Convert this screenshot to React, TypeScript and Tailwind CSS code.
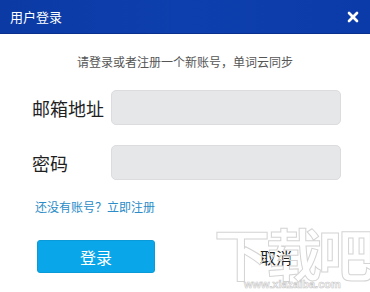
import { X } from "lucide-react";

const font = "font-['Noto_Sans_CJK_SC','Liberation_Sans',sans-serif]";

function Field({ label }: { label: string }) {
  return (
    <div className="flex items-center">
      <label className="w-[79px] text-[18px] leading-[24px] text-[#1f1f1f]">{label}</label>
      <input
        className="h-[35px] w-[230px] rounded-[5px] border border-[#dcdcde] bg-[#e6e7e9] px-2 text-[14px] outline-none"
        aria-label={label}
      />
    </div>
  );
}

export default function App() {
  return (
    <div className={`relative h-[292px] w-[370px] overflow-hidden bg-white ${font}`}>
      <header className="flex h-[34px] items-center justify-between border-b border-[#0a2f8c] bg-gradient-to-r from-[#0b3aa4] via-[#0d3fae] to-[#0b3ba8] pr-[5px] pl-[10px]">
        <h1 className="text-[13px] leading-none text-white">用户登录</h1>
        <button className="grid h-6 w-6 place-items-center text-white" aria-label="关闭">
          <X size={16} strokeWidth={4} />
        </button>
      </header>

      <p className="mt-[20px] text-center text-[12px] leading-[16px] text-[#555]">
        请登录或者注册一个新账号，单词云同步
      </p>

      <div className="mt-[20px] flex flex-col gap-[20px] pl-[32px]">
        <Field label="邮箱地址" />
        <Field label="密码" />
      </div>

      <a href="#" className="mt-[19px] ml-[35px] block text-[12px] leading-[16px] text-[#2a8cc8]">
        还没有账号？立即注册
      </a>

      <div className="mt-[25px] flex gap-[62px] pl-[37px]">
        <button className="h-[33px] w-[118px] rounded-[3px] border border-[#0a9ad8] bg-[#0aa6ea] text-[16px] text-white">
          登录
        </button>
        <button className="h-[33px] w-[118px] rounded-[3px] bg-white text-[16px] text-[#1f1f1f]">
          取消
        </button>
      </div>

      <div className="pointer-events-none absolute top-[226px] left-[214px] select-none">
        <div className="text-[56px] leading-[52px] font-bold tracking-[-4px] text-transparent [-webkit-text-stroke:1px_#d4d4d4]">
          下载吧
        </div>
        <div className="mt-[1px] ml-[30px] font-['Liberation_Sans',sans-serif] text-[11px] leading-[11px] font-bold text-transparent [-webkit-text-stroke:0.6px_#c8c8c8]">
          www.xiazaiba.com
        </div>
      </div>
    </div>
  );
}
